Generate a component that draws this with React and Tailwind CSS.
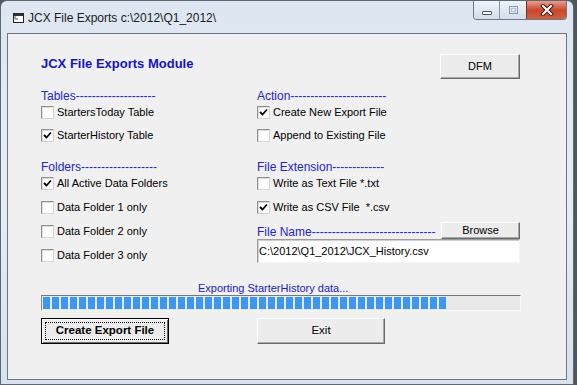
import React from 'react';

const font = { fontFamily: '"Liberation Sans", Arial, sans-serif' };

const CheckMark = () => (
  <svg width="9" height="9" viewBox="0 0 9 9">
    <path d="M1 4 L3.5 6.5 L8 1.5" fill="none" stroke="#000" strokeWidth="1.8" />
  </svg>
);

const CheckRow = ({ checked, label }) => (
  <div className="flex h-[13px] items-center">
    <span className="flex h-[13px] w-[13px] shrink-0 items-center justify-center border border-t-[#8e8f8f] border-l-[#8e8f8f] border-b-[#d6d6d6] border-r-[#d6d6d6] bg-white shadow-[inset_1px_1px_0_#dedede]">
      {checked && <CheckMark />}
    </span>
    <span className="ml-[3px] text-[11px] leading-[13px] text-black">{label}</span>
  </div>
);

const SectionLabel = ({ children, className = '' }) => (
  <div className={`h-[16px] text-[12px] leading-[16px] text-[#2323d8] whitespace-nowrap ${className}`}>
    {children}
  </div>
);

const Button = ({ children, className = '', isDefault = false }) => (
  <button
    className={`flex items-center justify-center bg-[#ececec] text-black ${
      isDefault
        ? 'border border-black p-[1px] shadow-[inset_1px_1px_0_#fff,inset_-1px_-1px_0_#6a6a6a]'
        : 'border border-t-white border-l-white border-b-[#6a6a6a] border-r-[#6a6a6a] shadow-[inset_-1px_-1px_0_#a8a8a8]'
    } ${className}`}
  >
    {isDefault ? (
      <span className="flex h-full w-full items-center justify-center p-[2px]">
        <span className="flex h-full w-full items-center justify-center border border-dotted border-black">
          {children}
        </span>
      </span>
    ) : (
      children
    )}
  </button>
);

const WindowIcon = () => (
  <svg width="13" height="12" viewBox="0 0 13 12">
    <rect x="1.5" y="1.5" width="10" height="9" fill="#fff" stroke="#222" />
    <rect x="1.5" y="1.5" width="10" height="2.5" fill="#333" />
    <path d="M3 4 L3 7 L6 7" fill="none" stroke="#555" strokeWidth="1" />
  </svg>
);

export default function App() {
  const blocks = Array.from({ length: 45 });

  return (
    <div className="h-[385px] w-[577px] overflow-hidden bg-[#50565d]" style={font}>
      <div className="flex h-[385px] w-[574px] flex-col rounded-t-[7px] border border-[#5d6875] bg-gradient-to-b from-[#dde6f1] via-[#e6edf5] to-[#d7e2ee] px-[6px] pb-[4px]">
        {/* Title bar */}
        <div className="flex h-[32px] shrink-0 items-start">
          <div className="ml-[5px] mt-[11px]">
            <WindowIcon />
          </div>
          <span className="ml-[3px] mt-[9px] text-[12px] leading-[16px] text-[#1b1b1b]">
            JCX File Exports c:\2012\Q1_2012\
          </span>
          <div className="ml-auto flex h-[19px] overflow-hidden rounded-b-[4px] border border-t-0 border-[#6c7889]">
            <div className="flex w-[25px] items-center justify-center bg-gradient-to-b from-[#eef3f9] to-[#d3deeb]">
              <span className="mt-[5px] h-[4px] w-[10px] rounded-[1px] border border-[#4b5563] bg-white"></span>
            </div>
            <div className="flex w-[27px] items-center justify-center border-l border-[#8a96a6] bg-gradient-to-b from-[#eef3f9] to-[#d3deeb]">
              <span className="h-[8px] w-[9px] border border-[#8a96a6] p-[1px]">
                <span className="block h-full w-full border border-[#b5bfcc]"></span>
              </span>
            </div>
            <div className="flex w-[40px] items-center justify-center border-l border-[#7a2a1e] bg-gradient-to-b from-[#e8a08c] via-[#c9462c] to-[#d2603e]">
              <svg width="14" height="12" viewBox="0 0 14 12">
                <path d="M3 2 L11 10 M11 2 L3 10" stroke="#4a1a10" strokeWidth="4" strokeLinecap="square" />
                <path d="M3 2 L11 10 M11 2 L3 10" stroke="#fff" strokeWidth="2" strokeLinecap="square" />
              </svg>
            </div>
          </div>
        </div>

        {/* Client area */}
        <div className="flex flex-1 flex-col border border-[#6e7680] bg-[#f0f0f0] pl-[33px] pr-[46px] pt-[20px]">
          <div className="flex items-start justify-between">
            <h1 className="mt-[2px] text-[13px] font-bold leading-[16px] text-[#1414c8]">JCX File Exports Module</h1>
            <Button className="h-[25px] w-[80px] text-[11px]">DFM</Button>
          </div>

          <div className="mt-[9px] flex">
            {/* Left column */}
            <div className="flex w-[216px] flex-col">
              <SectionLabel>Tables--------------------</SectionLabel>
              <div className="mt-[2px]">
                <CheckRow label="StartersToday Table" />
              </div>
              <div className="mt-[10px]">
                <CheckRow checked label="StarterHistory Table" />
              </div>
              <SectionLabel className="mt-[17px]">Folders-------------------</SectionLabel>
              <div className="mt-[2px]">
                <CheckRow checked label="All Active Data Folders" />
              </div>
              <div className="mt-[11px]">
                <CheckRow label="Data Folder 1 only" />
              </div>
              <div className="mt-[11px]">
                <CheckRow label="Data Folder 2 only" />
              </div>
              <div className="mt-[11px]">
                <CheckRow label="Data Folder 3 only" />
              </div>
            </div>

            {/* Right column */}
            <div className="flex w-[263px] flex-col">
              <SectionLabel>Action------------------------</SectionLabel>
              <div className="mt-[2px]">
                <CheckRow checked label="Create New Export File" />
              </div>
              <div className="mt-[10px]">
                <CheckRow label="Append to Existing File" />
              </div>
              <SectionLabel className="mt-[17px]">File Extension-------------</SectionLabel>
              <div className="mt-[2px]">
                <CheckRow label="Write as Text File *.txt" />
              </div>
              <div className="mt-[11px]">
                <CheckRow checked label={'Write as CSV File\u00a0\u00a0*.csv'} />
              </div>
              <div className="mt-[9px] flex h-[16px] items-end justify-between">
                <SectionLabel className="-mb-[1px]">File Name-------------------------------</SectionLabel>
                <Button className="h-[17px] w-[79px] shrink-0 text-[11px]">Browse</Button>
              </div>
              <div className="flex h-[24px] items-center border border-t-[#9c9c9c] border-l-[#9c9c9c] border-b-[#f4f4f4] border-r-[#f4f4f4] bg-white pl-[1px] shadow-[inset_1px_1px_0_#cfcfcf]">
                <span className="text-[11px] leading-[13px] text-black">C:\2012\Q1_2012\JCX_History.csv</span>
              </div>
            </div>
          </div>

          <div className="ml-[157px] mt-[19px] text-[11px] leading-[13px] text-[#2020c8]">
            Exporting StarterHistory data...
          </div>

          <div className="flex h-[16px] w-[480px] items-center gap-[2px] border border-t-[#777] border-l-[#8a8a8a] border-b-[#fafafa] border-r-[#fafafa] bg-[#e8e8e8] px-[1px]">
            {blocks.map((_, i) => (
              <span key={i} className="h-[12px] w-[7px] shrink-0 bg-[#3a97f4]"></span>
            ))}
          </div>

          <div className="mt-[7px] flex">
            <Button isDefault className="h-[26px] w-[128px] text-[11.5px] font-bold">
              Create Export File
            </Button>
            <Button className="ml-[88px] h-[26px] w-[128px] text-[11.5px]">Exit</Button>
          </div>
        </div>
      </div>
    </div>
  );
}
